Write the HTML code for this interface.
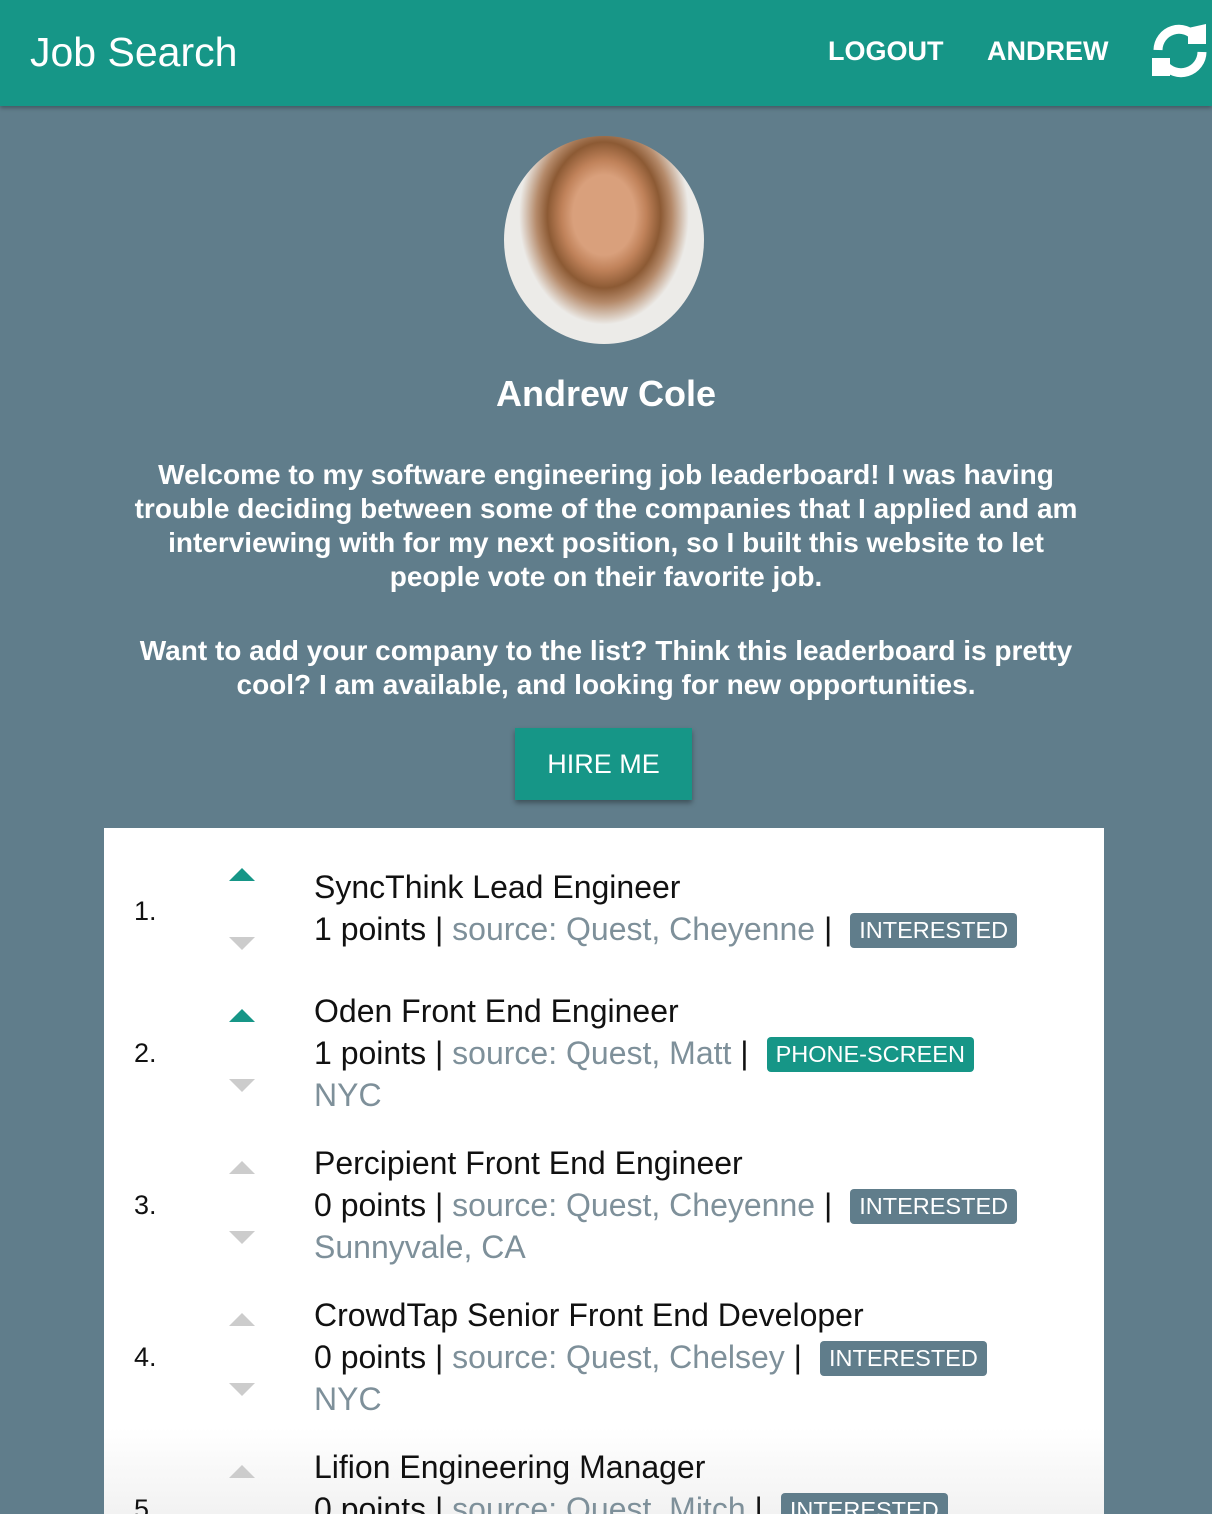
<!DOCTYPE html>
<html><head><style>
html,body{margin:0;width:1212px;height:1514px;overflow:hidden;}
body{background:#607d8b;font-family:"Liberation Sans",sans-serif;position:relative}
.hdr{position:absolute;left:0;top:0;width:1212px;height:106px;background:#169687;box-shadow:0 2px 4px rgba(0,0,0,.3);}
.hdr .t{position:absolute;left:30px;top:29px;color:#fff;font-size:41px;}
.hdr .n{position:absolute;top:36px;color:#fff;font-size:27px;font-weight:bold;}
.av{position:absolute;left:504px;top:136px;width:200px;height:208px;border-radius:50%;background:radial-gradient(ellipse at 50% 38%,#d9a07c 0 22%,#c0825a 30%,#8c5a34 40%,#b58a6a 48%,#ecebe8 60%);overflow:hidden}
.name{position:absolute;top:373px;width:1212px;text-align:center;color:#fff;font-size:36px;font-weight:bold}
.p{position:absolute;width:1212px;text-align:center;color:#fff;font-size:28px;font-weight:bold;line-height:34px}
.btn{position:absolute;left:515px;top:728px;width:177px;height:72px;background:#169687;color:#fff;font-size:27px;line-height:72px;text-align:center;box-shadow:0 3px 5px rgba(0,0,0,.35)}
.card{position:absolute;left:104px;top:828px;width:1000px;height:686px;background:linear-gradient(#fff 0,#fff 600px,#f2f2f2 686px);overflow:hidden}
.it{position:absolute;left:0;width:1000px;font-size:32px}
.num{position:absolute;left:30px;color:#111;font-size:27px}
.up,.dn{position:absolute;left:125px;width:0;height:0;border-left:13px solid transparent;border-right:13px solid transparent}
.up{border-bottom:13px solid #ccc}.dn{border-top:13px solid #ccc}
.up.on{border-bottom-color:#169687}
.ttl{position:absolute;left:210px;color:#111;white-space:nowrap;line-height:42px}
.g{color:#7e909a}
.b{display:inline-block;background:#607d8b;color:#fff;font-size:23.5px;padding:0 9px;border-radius:4px;margin-left:18px;vertical-align:2px;line-height:35px}
.b.t{background:#169687}
</style></head><body>
<div class="hdr"><div class="t">Job Search</div>
<div class="n" style="left:828px">LOGOUT</div><div class="n" style="left:987px">ANDREW</div>
<svg style="position:absolute;left:1150px;top:22px" width="60" height="58" viewBox="0 0 60 58"><path d="M8 28 A21 21 0 0 1 46 16" stroke="#fff" stroke-width="9" fill="none"/><path d="M38 6 L56 2 L56 22 L38 22Z" fill="#fff"/><path d="M52 30 A21 21 0 0 1 14 42" stroke="#fff" stroke-width="9" fill="none"/><path d="M2 36 L20 36 L20 54 L2 54Z" fill="#fff"/></svg>
</div>
<div class="av"></div>
<div class="name">Andrew Cole</div>
<div class="p" style="top:458px">Welcome to my software engineering job leaderboard! I was having<br>trouble deciding between some of the companies that I applied and am<br>interviewing with for my next position, so I built this website to let<br>people vote on their favorite job.</div>
<div class="p" style="top:634px">Want to add your company to the list? Think this leaderboard is pretty<br>cool? I am available, and looking for new opportunities.</div>
<div class="btn">HIRE ME</div>
<div class="card">
<div class="it" style="top:40px"><div class="num" style="top:28px">1.</div><div class="up on" style="top:0"></div><div class="dn" style="top:69px"></div>
<div class="ttl" style="top:-2px">SyncThink Lead Engineer<br>1 points | <span class="g">source: Quest, Cheyenne</span> |<span class="b">INTERESTED</span></div></div>
<div class="it" style="top:164px"><div class="num" style="top:46px">2.</div><div class="up on" style="top:17px"></div><div class="dn" style="top:87px"></div>
<div class="ttl" style="top:-2px">Oden Front End Engineer<br>1 points | <span class="g">source: Quest, Matt</span> |<span class="b t">PHONE-SCREEN</span><br><span class="g">NYC</span></div></div>
<div class="it" style="top:316px"><div class="num" style="top:46px">3.</div><div class="up" style="top:17px"></div><div class="dn" style="top:87px"></div>
<div class="ttl" style="top:-2px">Percipient Front End Engineer<br>0 points | <span class="g">source: Quest, Cheyenne</span> |<span class="b">INTERESTED</span><br><span class="g">Sunnyvale, CA</span></div></div>
<div class="it" style="top:468px"><div class="num" style="top:46px">4.</div><div class="up" style="top:17px"></div><div class="dn" style="top:87px"></div>
<div class="ttl" style="top:-2px">CrowdTap Senior Front End Developer<br>0 points | <span class="g">source: Quest, Chelsey</span> |<span class="b">INTERESTED</span><br><span class="g">NYC</span></div></div>
<div class="it" style="top:620px"><div class="num" style="top:46px">5.</div><div class="up" style="top:17px"></div>
<div class="ttl" style="top:-2px">Lifion Engineering Manager<br>0 points | <span class="g">source: Quest, Mitch</span> |<span class="b">INTERESTED</span></div></div>
</div>
</body></html>
